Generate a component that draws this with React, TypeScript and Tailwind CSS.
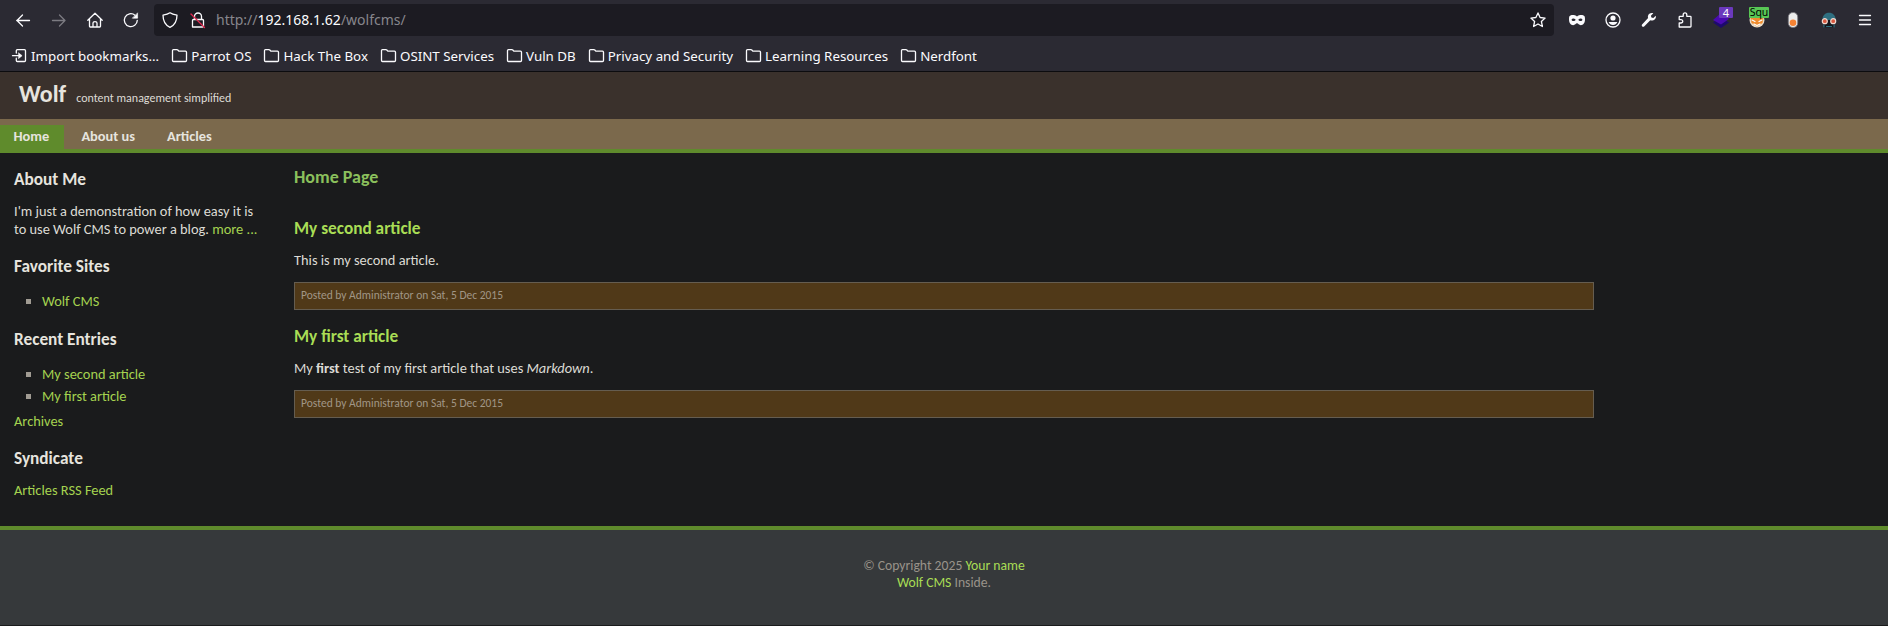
import type { ReactNode } from "react";

function Icon({ children, className = "" }: { children: ReactNode; className?: string }) {
  return (
    <svg
      viewBox="0 0 16 16"
      className={`size-4 shrink-0 overflow-visible ${className}`}
      fill="none"
      stroke="currentColor"
      strokeWidth={1.3}
      strokeLinecap="round"
      strokeLinejoin="round"
    >
      {children}
    </svg>
  );
}

function ToolButton({ children, className = "" }: { children: ReactNode; className?: string }) {
  return (
    <button type="button" className={`flex h-8 w-9 items-center justify-center ${className}`}>
      {children}
    </button>
  );
}

function Badge({ children, className }: { children: ReactNode; className: string }) {
  return (
    <span className={`absolute flex h-[11px] items-center justify-center rounded-[1px] leading-none ${className}`}>
      {children}
    </span>
  );
}

const folders = [
  "Parrot OS",
  "Hack The Box",
  "OSINT Services",
  "Vuln DB",
  "Privacy and Security",
  "Learning Resources",
  "Nerdfont",
];

function FolderIcon() {
  return (
    <Icon>
      <path d="M1.500 12.500V2.600q0-1 1-1h3.400q.5 0 .9.4l1 1.200h6.700q1 0 1 1v8.300q0 1-1 1H2.500q-1 0-1-1z" />
    </Icon>
  );
}

function BrowserChrome() {
  return (
    <div className="h-[72px] border-b border-[#0c0c0f] bg-[#2b2a33] font-['Noto_Sans',sans-serif] text-[#fbfbfe]">
      <div className="flex h-10 items-center px-[5px]">
        <ToolButton>
          <Icon><path d="M14.500 8.500H1.700M7.500 3 2 8.500 7.500 14" /></Icon>
        </ToolButton>
        <ToolButton className="text-[#7c7b82]">
          <Icon><path d="M1.500 8.500h12.500M8.500 3 14 8.500 8.500 14" /></Icon>
        </ToolButton>
        <ToolButton>
          <Icon><path d="M.8 8.200 8 1.200l7.200 7M2.500 7v7.200q0 .8.8.8h9.400q.8 0 .8-.8V7M6 15v-4q0-1.300 2-1.300t2 1.300v4" /></Icon>
        </ToolButton>
        <ToolButton>
          <Icon>
            <path d="M14.300 8.300A6.500 6.500 0 1 1 12 3.200" />
            <path d="M14.600 1.200v5H9.600z" fill="currentColor" strokeWidth={0.6} />
          </Icon>
        </ToolButton>
        <div className="mx-[5px] flex h-8 flex-1 items-center rounded bg-[#1c1b22] px-2">
          <Icon><path d="M8 .8C6.200 2.200 3.600 2.800 1 3.100 1 8.500 3 13.200 8 15.400c5-2.200 7-6.900 7-12.300C12.400 2.800 9.800 2.200 8 .8z" /></Icon>
          <Icon className="ml-3">
            <path d="M2.500 15V8.500q0-1 1-1h9q1 0 1 1V14q0 1-1 1z" />
            <path d="M4.500 7.200V4.500a3.500 3.500 0 0 1 7 0v2.700" />
            <path d="M1 2 14.500 15.500" stroke="#e22850" />
          </Icon>
          <div className="ml-[10px] flex-1 text-[14px] leading-8 whitespace-nowrap text-[#87868c]">
            http://<span className="text-[#fbfbfe]">192.168.1.62</span>/wolfcms/
          </div>
          <Icon>
            <path d="m8 .9 2.100 4.600 5 .6-3.700 3.400 1 5L8 12l-4.400 2.500 1-5L.9 6.100l5-.6z" />
          </Icon>
        </div>
        <ToolButton>
          <Icon>
            <path
              fill="currentColor"
              stroke="none"
              fillRule="evenodd"
              d="M8 4.400C6.500 3.200 4 2.900 2 3.200.5 3.500 0 4.600 0 7c0 4 1.700 6.200 4.200 6.200 1.800 0 2.600-1.900 3.800-1.900s2 1.900 3.800 1.900C14.300 13.200 16 11 16 7c0-2.400-.5-3.500-2-3.800-2-.3-4.500 0-6 1.200zM4.500 6.500c1.200 0 2.100.8 2.100 1.300s-.9 1.300-2 1.300-2-.6-2-1.300.8-1.300 1.900-1.300zm7 0c1.100 0 1.900.6 1.900 1.300s-.9 1.300-2 1.300-2-.8-2-1.300.9-1.300 2.100-1.300z"
            />
          </Icon>
        </ToolButton>
        <ToolButton>
          <Icon>
            <circle cx="8" cy="8" r="7" />
            <circle cx="8" cy="6" r="2.600" fill="currentColor" stroke="none" />
            <path d="M3.600 10h8.800c-.8 2-2.400 3-4.400 3s-3.600-1-4.400-3z" fill="currentColor" stroke="none" />
          </Icon>
        </ToolButton>
        <ToolButton>
          <Icon>
            <path
              fill="currentColor"
              stroke="none"
              d="M14.800 3.700 12.300 6 10.400 5.500 9.900 3.700 12.300 1.200C10 .4 7.400 1.600 6.900 4.200c-.1.700 0 1.300.2 1.900L1.300 12.300c-.7.7-.7 1.500-.1 2.100s1.500.6 2.200-.1l5.900-6c3 1 6.200-1.400 5.500-4.600z"
            />
          </Icon>
        </ToolButton>
        <ToolButton>
          <Icon>
            <path d="M2.200 15V11h1.600c2.600 0 2.600-3.400 0-3.400H2.200V5q0-.7.700-.7h3.300V2.800c0-2.600 3.600-2.600 3.600 0v1.500h3.500q.7 0 .7.700v9.300q0 .7-.7.700z" />
          </Icon>
        </ToolButton>
        <ToolButton className="relative">
          <Icon>
            <path d="m8 5.500 8 5L8 16l-8-5.500z" fill="#1d0a6e" stroke="none" />
            <path d="m8 1 8 6-8 5.500L0 8z" fill="#4a0bb0" stroke="none" />
          </Icon>
          <Badge className="top-[3px] left-[16px] w-[14px] bg-[#6b39bd] text-[11px] text-white">4</Badge>
        </ToolButton>
        <ToolButton className="relative">
          <Icon>
            <circle cx="8" cy="8" r="7.500" fill="#e9dcc8" stroke="none" />
            <path d="M1.500 6h13l-1 5L8 14.500 2.500 11z" fill="#f08c2e" stroke="none" />
            <path d="m3 8 3 1.500M13 8l-3 1.500M5 12l3 1.500 3-1.500" stroke="#fff" strokeWidth={1.2} />
          </Icon>
          <Badge className="top-[3px] left-[10px] w-[20px] bg-[#58c655] text-[10.5px] text-black">Squ</Badge>
        </ToolButton>
        <ToolButton>
          <Icon>
            <rect x="3.300" y=".5" width="9.400" height="15" rx="4.500" fill="#ececec" stroke="#77767c" strokeWidth={0.8} />
            <circle cx="8" cy="10.700" r="3.300" fill="#f58233" stroke="none" />
          </Icon>
        </ToolButton>
        <ToolButton>
          <Icon>
            <path d="M1.300 8.500C1.300 3.400 4.300.8 8 .8s6.700 2.600 6.700 7.700z" fill="#2f6f80" stroke="none" />
            <path d="M2.500 8h11v7.300h-11z" fill="#11161d" stroke="none" />
            <path d="M2.900 13v2M13.100 13v2M5.500 14.500h5" stroke="#2f6f80" strokeWidth={1.2} />
            <circle cx="3.800" cy="9.200" r="2.500" fill="#d9583f" stroke="#f0d9cf" strokeWidth={1.2} />
            <circle cx="12.200" cy="9.200" r="2.500" fill="#d9583f" stroke="#f0d9cf" strokeWidth={1.2} />
          </Icon>
        </ToolButton>
        <ToolButton>
          <Icon><path d="M2.500 3.500h11M2.500 8h11M2.500 12.500h11" /></Icon>
        </ToolButton>
      </div>
      <div className="flex h-8 items-center gap-3 pl-[11px] text-[13.33px] leading-8 whitespace-nowrap">
        <div className="flex items-center gap-1">
          <Icon>
            <path d="M5.300 5V2.700q0-1 1-1h7.200q1 0 1 1v9.800q0 1-1 1H6.300q-1 0-1-1v-2.300M1.500 7.700h6" />
            <path d="m7.700 5 3.400 2.700-3.400 2.700z" fill="currentColor" strokeWidth={0.6} />
          </Icon>
          <span>Import bookmarks...</span>
        </div>
        {folders.map((name) => (
          <div key={name} className="flex items-center gap-1">
            <FolderIcon />
            <span>{name}</span>
          </div>
        ))}
      </div>
    </div>
  );
}

function SideHeading({ children, className = "" }: { children: ReactNode; className?: string }) {
  return <h3 className={`text-[17.28px] leading-[26px] font-bold text-[#e6e4de] ${className}`}>{children}</h3>;
}

function SideLink({ children }: { children: ReactNode }) {
  return (
    <li className="flex h-[22px] items-center">
      <span className="mr-[11px] size-[5px] bg-[#a19c93]" />
      <a className="text-[#a5d350]">{children}</a>
    </li>
  );
}

function Sidebar() {
  return (
    <aside className="w-[294px] pt-[14px] pl-[14px] text-[14.4px] leading-[18px]">
      <SideHeading>About Me</SideHeading>
      <p className="mt-[9px] whitespace-nowrap">
        I'm just a demonstration of how easy it is
        <br />
        to use Wolf CMS to power a blog. <a className="text-[#a5d350]">more ...</a>
      </p>
      <SideHeading className="mt-4">Favorite Sites</SideHeading>
      <ul className="mt-[10px] pl-3">
        <SideLink>Wolf CMS</SideLink>
      </ul>
      <SideHeading className="mt-[15px]">Recent Entries</SideHeading>
      <ul className="mt-[10px] pl-3">
        <SideLink>My second article</SideLink>
        <SideLink>My first article</SideLink>
      </ul>
      <p className="mt-[5px]"><a className="text-[#a5d350]">Archives</a></p>
      <SideHeading className="mt-4">Syndicate</SideHeading>
      <p className="mt-[9px]"><a className="text-[#a5d350]">Articles RSS Feed</a></p>
    </aside>
  );
}

function Article({ title, children, className = "" }: { title: string; children: ReactNode; className?: string }) {
  return (
    <article className={className}>
      <h3 className="text-[17.28px] leading-[26px] font-bold text-[#a9dd55]">{title}</h3>
      <p className="mt-[9px] text-[14.4px] leading-[18px]">{children}</p>
      <p className="mt-[13px] h-7 border border-[#655d50] bg-[#503918] px-[6px] text-[11.52px] leading-[24px] text-[#a09686]">
        Posted by Administrator on Sat, 5 Dec 2015
      </p>
    </article>
  );
}

export default function App() {
  return (
    <div className="flex h-[626px] flex-col overflow-hidden border-b border-[#1a1b1c] bg-[#1a1b1c] font-[Carlito,Lato,sans-serif] text-[#dddbd5]">
      <BrowserChrome />
      <header className="flex h-[47px] items-baseline gap-[10px] bg-[#3a312c] pl-[19px]">
        <h1 className="text-[24px] leading-[44px] font-bold text-[#e6e4de]">Wolf</h1>
        <span className="text-[12px]">content management simplified</span>
      </header>
      <nav className="flex h-[34px] items-end border-b-4 border-[#5f8b2c] bg-[#7b694c] text-[14.4px] leading-[22px] font-bold text-[#e6e4de]">
        <a className="h-6 w-16 bg-[#5f8b2c] pl-[13.4px]">Home</a>
        <a className="h-6 pl-[17.4px]">About us</a>
        <a className="h-6 pl-8">Articles</a>
      </nav>
      <div className="flex h-[373px]">
        <Sidebar />
        <main className="w-[1300px] pt-3">
          <h2 className="text-[18px] leading-6 font-bold text-[#8bc05c]">Home Page</h2>
          <Article title="My second article" className="mt-[27px]">This is my second article.</Article>
          <Article title="My first article" className="mt-[14px]">
            My <strong>first</strong> test of my first article that uses <em>Markdown</em>.
          </Article>
        </main>
      </div>
      <footer className="flex-1 border-t-4 border-[#5f8b2c] bg-[#36393b] pt-[27px] text-center text-[13.68px] leading-[17px] text-[#99938a]">
        <p>© Copyright 2025 <a className="text-[#a9dd55]">Your name</a></p>
        <p><a className="text-[#a9dd55]">Wolf CMS</a> Inside.</p>
      </footer>
    </div>
  );
}
